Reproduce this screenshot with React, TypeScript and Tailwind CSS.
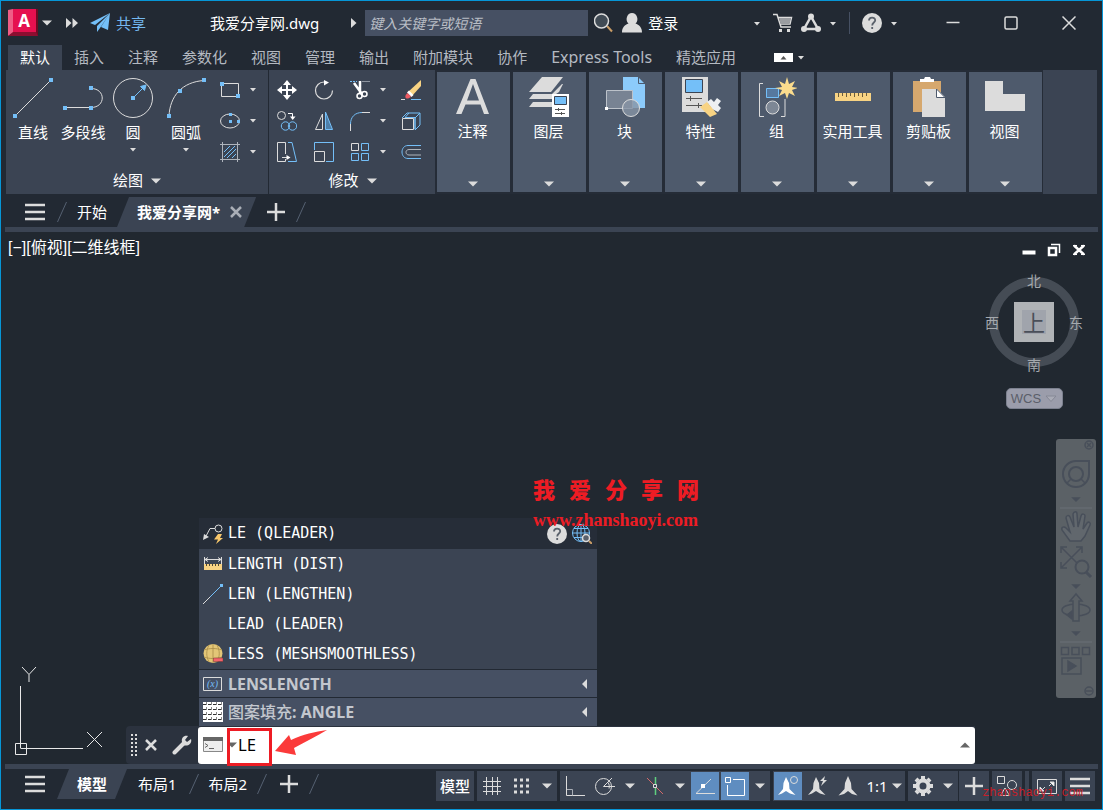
import React from 'react';

const GREY = '#dcdcdc';
const BLUE = '#74bff8';

type IconProps = { w?: number; h?: number; children: React.ReactNode };

const Icon: React.FC<IconProps> = ({ w = 20, h = 20, children }) => (
  <svg width={w} height={h} viewBox={`0 0 ${w} ${h}`} fill="none" stroke={GREY} aria-hidden="true" className="block shrink-0">
    {children}
  </svg>
);

const Caret: React.FC<{ small?: boolean }> = ({ small }) =>
  small ? (
    <Icon w={8} h={5}><path d="M1 1h6L4 4.5z" fill={GREY} stroke="none" /></Icon>
  ) : (
    <Icon w={10} h={6}><path d="M0 .5h10L5 5.5z" fill={GREY} stroke="none" /></Icon>
  );

const Dots: React.FC<{ points: number[][] }> = ({ points }) => (
  <>
    {points.map(([x, y]) => (
      <rect key={`${x}-${y}`} x={x} y={y} width="4" height="4" fill={BLUE} stroke="none" />
    ))}
  </>
);

const Plus = () => (
  <Icon><path d="M10 1v18M1 10h18" strokeWidth="2.500" /></Icon>
);

const Menu = () => (
  <Icon><path d="M0 3h20M0 10h20M0 17h20" strokeWidth="2.500" /></Icon>
);

const Slash = () => (
  <Icon w={10}><path d="M.5 20L9.5 0" stroke="#566172" /></Icon>
);

const HelpBadge = () => (
  <Icon>
    <circle cx="10" cy="10" r="10" fill={GREY} stroke="none" />
    <path d="M7 7.5c0-4 6.200-3.800 6.200-.3 0 2.300-3 2.400-3 5.200M10.200 14v2" stroke="#5a616b" strokeWidth="1.800" />
  </Icon>
);

/* ---------- ribbon data ---------- */

const TABS = ['默认', '插入', '注释', '参数化', '视图', '管理', '输出', '附加模块', '协作', 'Express Tools', '精选应用'];

const DRAW_TOOLS = [
  {
    label: '直线', menu: false, wide: false,
    icon: <Icon w={40} h={40}><path d="M2 38L38 2" /><Dots points={[[0, 36], [36, 0]]} /></Icon>,
  },
  {
    label: '多段线', menu: false, wide: false,
    icon: <Icon w={40} h={40}><path d="M2 29.500h26c15 0 15-19 0-19" /><Dots points={[[0, 28], [26, 28], [26, 8]]} /></Icon>,
  },
  {
    label: '圆', menu: true, wide: false,
    icon: (
      <Icon w={40} h={40}>
        <circle cx="20" cy="20" r="19.500" />
        <path d="M20 20L29 11" stroke={BLUE} />
        <path d="M33 7l-1.500 5.500-4-4z" fill={BLUE} stroke={BLUE} />
        <Dots points={[[18, 18]]} />
      </Icon>
    ),
  },
  {
    label: '圆弧', menu: true, wide: true,
    icon: <Icon w={40} h={40}><path d="M3 38C4 18 16 4 38 2.500" /><Dots points={[[1, 36], [12, 11], [36, 0]]} /></Icon>,
  },
];

const SHAPE_TOOLS = [
  { name: '矩形', icon: <Icon><path d="M1.500 3.500h17v13h-17z" /><Dots points={[[0, 2], [16, 14]]} /></Icon> },
  {
    name: '椭圆',
    icon: (
      <Icon>
        <ellipse cx="10" cy="10" rx="9.500" ry="7" />
        <path d="M9 2h3v3H9zM9 9h3v3H9zM17 9h3v3h-3z" fill={BLUE} stroke="none" />
      </Icon>
    ),
  },
  {
    name: '图案填充',
    icon: (
      <Icon>
        <path d="M0 2.500h20M0 17.500h20M2.500 0v20M17.500 0v20" stroke="#aeb4bc" />
        <path d="M4 10l6-6M4 15L15 4M7 16l9-9M12 16l4-4" stroke={BLUE} />
      </Icon>
    ),
  },
];

const MODIFY_TOOLS = [
  [
    {
      name: '移动',
      icon: (
        <Icon>
          <path d="M10 3v14M3 10h14" strokeWidth="2" stroke="#fff" />
          <path d="M10 0l4 5H6zM10 20l4-5H6zM0 10l5-4v8zM20 10l-5-4v8z" fill="#fff" stroke="none" />
        </Icon>
      ),
    },
    {
      name: '旋转',
      icon: <Icon><path d="M18.500 10.500a8.500 8.500 0 1 1-8.500-8.500" strokeWidth="1.200" /><path d="M10 0l5 2.500-5 3z" fill="#fff" stroke="none" /></Icon>,
    },
    {
      name: '修剪',
      icon: (
        <Icon>
          <path d="M0 1.500h7" stroke={BLUE} strokeDasharray="2 1" /><path d="M12 1.500h8" stroke="#8d949f" />
          <path d="M4 3l8 11M10 1v12" stroke="#fff" strokeWidth="2.500" />
          <circle cx="9.500" cy="16" r="2.500" stroke="#fff" strokeWidth="1.500" /><circle cx="14.500" cy="14" r="2.500" stroke="#fff" strokeWidth="1.500" />
        </Icon>
      ),
    },
    {
      name: '删除',
      icon: (
        <Icon>
          <path d="M0 19.500h4" /><path d="M10 19.500h10" stroke={BLUE} />
          <path d="M20 0v6l-9 10-4-4z" fill="#f8d383" stroke="none" />
          <path d="M8 10.500l4.500 4.500-2 2L6 12.500z" fill="#fff" stroke="none" />
          <path d="M6.500 13l3.500 3.500c-2 2.500-5 2.500-5.500 1s0-3 2-4.500z" fill="#ee5b62" stroke="none" />
        </Icon>
      ),
    },
  ],
  [
    {
      name: '复制',
      icon: (
        <Icon>
          <circle cx="4.500" cy="4.500" r="4" />
          <path d="M11 2.500h4.500V7" stroke="#fff" /><path d="M13 5.500h5.500L15.700 9z" fill="#fff" stroke="none" />
          <circle cx="8.500" cy="15" r="4.200" stroke={BLUE} /><circle cx="15.500" cy="15" r="4.200" stroke={BLUE} />
        </Icon>
      ),
    },
    { name: '镜像', icon: <Icon><path d="M8.500 3v15.500h-7z" /><path d="M11.500 1v17.500h7z" stroke={BLUE} fill="#4f7fa8" /></Icon> },
    { name: '圆角', icon: <Icon><path d="M.5 20v-7M12 1.500h8" /><path d="M.5 13C.5 6 5 1.500 12 1.500" stroke={BLUE} /></Icon> },
    {
      name: '分解',
      icon: (
        <Icon>
          <path d="M1 7l5-5h13v12l-5 5M19 2l-5 5M8 2L4 6.500h10v12M14 7v11" stroke={BLUE} />
          <path d="M1.500 7.500h11v11h-11z" />
        </Icon>
      ),
    },
  ],
  [
    {
      name: '拉伸',
      icon: (
        <Icon>
          <path d="M8.500 12V.5h-8v19h8V17M5 15.500h6" /><path d="M9.500 13l4 2.500-4 2.500z" fill="#fff" stroke="none" />
          <path d="M11 .5h4l4.500 19H11" stroke={BLUE} />
        </Icon>
      ),
    },
    { name: '缩放', icon: <Icon><path d="M.5 8V.5h19v19H12" stroke={BLUE} /><path d="M.5 9.500h10v10H.5z" /></Icon> },
    {
      name: '阵列',
      icon: <Icon><path d="M1.500 1.500h7v7h-7z" /><path d="M11.500 1.500h7v7h-7zM1.500 11.500h7v7h-7zM11.500 11.500h7v7h-7z" stroke={BLUE} /></Icon>,
    },
    { name: '偏移', icon: <Icon><path d="M20 3.500H7c-8 0-8 13 0 13h13" stroke={BLUE} /><path d="M20 7.500H8c-4 0-4 5.500 0 5.500h12" stroke="#aeb4bc" /></Icon> },
  ],
];

const PANELS = [
  {
    label: '注释',
    icon: <Icon w={40} h={40}><path d="M3 37L17.500 2h5L36 37h-5l-3.500-9.500h-15L8.500 37zM14 23.500h12L20 7z" fill={GREY} fillRule="evenodd" stroke="none" /></Icon>,
  },
  {
    label: '图层',
    icon: (
      <Icon w={40} h={40}>
        <g fill={GREY} stroke="none">
          <path d="M13 0h21L22 15H0z" />
          <path d="M4 17h19L33 7h1l-4 8-3 2-4 5H0z" />
          <path d="M4 25h19v5H0z" />
          <path d="M23 17h17v23H23z" fill="#fff" />
        </g>
        <path d="M25.500 19.500h12v8h-12z" fill={BLUE} stroke="#3b4453" />
        <path d="M26 32.500h10M26 36.500h10M29.500 31v3M32.500 35v3" stroke="#555" />
      </Icon>
    ),
  },
  {
    label: '块',
    icon: (
      <Icon w={40} h={40}>
        <path d="M18 0h15l7 7v24H18z" fill="#8ccbfb" stroke="none" />
        <path d="M33.500 0v6.500H40" stroke="#4a5a70" />
        <path d="M1.500 13.500h26v18h-26z" fill="#788393" stroke="#bcc2ca" />
        <circle cx="26" cy="31" r="8.500" fill="#8794a5" fillOpacity=".8" />
        <path d="M0 30h3v3H0z" fill="#fff" stroke="none" />
      </Icon>
    ),
  },
  {
    label: '特性',
    icon: (
      <Icon w={40} h={40}>
        <path d="M1 0h26v35H1z" fill={GREY} stroke="none" />
        <path d="M4.500 2.500h17v13h-17z" fill={BLUE} stroke="#3b4453" />
        <path d="M5 21.500h16M5 28.500h16M9.500 19v5M17.500 26v5" stroke="#555" />
        <path d="M26 25l4-3 3 3 3-4 4 3-3 4 3 3-3 4-6-3z" fill="#eef0f2" stroke="none" />
        <path d="M19 30l7-5 10 12-7 3z" fill="#f8d383" stroke="none" />
      </Icon>
    ),
  },
  {
    label: '组',
    icon: (
      <Icon w={40} h={40}>
        <path d="M6 6.500H2.500v33H7M24 39.500h4V22" />
        <path d="M9.500 11.500h12v9h-12z" fill="#56789e" stroke={BLUE} />
        <circle cx="15.500" cy="30.500" r="6.500" fill="#7d8795" />
        <path d="M30 0l2 7 6-3-3 6 6 1-6 2 3 6-6-3-2 6-2-6-6 3 3-6-7-2 7-1-3-6 6 3z" fill="#fbdc8d" stroke="none" />
      </Icon>
    ),
  },
  {
    label: '实用工具',
    icon: (
      <Icon w={40} h={40}>
        <path d="M2 16h36v8H2z" fill="#f8d383" stroke="none" />
        <path d="M5.500 16v4M9.500 16v3M13.500 16v4M17.500 16v3M21.500 16v4M25.500 16v3M29.500 16v4M33.500 16v3" stroke="#6a5c3c" />
      </Icon>
    ),
  },
  {
    label: '剪贴板',
    icon: (
      <Icon w={40} h={40}>
        <path d="M4 4h28v31H4z" fill="#d6a86e" stroke="none" />
        <path d="M11 5V2h4l1-2h5l1 2h3v3z" fill="#fff" stroke="none" />
        <path d="M13 12h15l8 8v20H13z" fill={GREY} stroke="none" />
        <path d="M27.500 12v8.500H36z" fill="#fff" stroke="#4e5a6c" />
      </Icon>
    ),
  },
  {
    label: '视图',
    icon: <Icon w={40} h={40}><path d="M0 4h18v13h22v17H0z" fill={GREY} stroke="none" /></Icon>,
  },
];

/* ---------- title bar ---------- */

const TitleBar = () => (
  <header className="flex h-11 items-center pr-[26px] pl-[7px] text-[15px] text-white">
    <button aria-label="应用程序菜单" className="flex items-center gap-1">
      <svg width="30" height="28" viewBox="0 0 30 28" className="block">
        <path d="M5 0h25v27H5z" fill="#6e0a22" />
        <path d="M0 1l5-1v24L0 27z" fill="#ef5d86" />
        <path d="M5 0h23v23H5z" fill="#e5104f" />
        <path d="M0 27l5-4h23l2 4z" fill="#8c0e30" />
        <text x="16" y="18" textAnchor="middle" fontSize="17" className="fill-white font-['Open_Sans',sans-serif] font-bold">A</text>
      </svg>
      <Caret />
    </button>
    <button aria-label="更多" className="ml-3.5">
      <Icon w={12} h={12}><path d="M0 1l5.500 5L0 11zM6.500 1l5.500 5-5.500 5z" fill={GREY} stroke="none" /></Icon>
    </button>
    <button className="ml-3 flex items-center gap-1.5 text-[#74b8f0]">
      <Icon>
        <path d="M20 0L0 10l5 2zM20 0L7 13v6l3-4zM20 0l-9 14 7 3z" fill={BLUE} stroke="none" />
      </Icon>
      共享
    </button>
    <h1 className="ml-16 whitespace-nowrap">我爱分享网.dwg</h1>
    <div className="ml-8 flex items-center gap-2">
      <Icon w={6} h={10}><path d="M0 0l5.500 5L0 10z" fill={GREY} stroke="none" /></Icon>
      <input
        type="search"
        aria-label="搜索"
        placeholder="键入关键字或短语"
        className="h-[26px] w-[223px] bg-[#465063] px-1 text-[14px] italic outline-none placeholder:text-[#b9bec6]"
      />
    </div>
    <button aria-label="搜索" className="ml-1.5">
      <Icon><path d="M13 13l5 5.500" stroke="#c99c66" strokeWidth="2" /><circle cx="7.500" cy="8" r="7" fill="#414b55" strokeWidth="1.500" /></Icon>
    </button>
    <button className="ml-2 flex items-center gap-1.5 whitespace-nowrap">
      <Icon><path d="M10 0a5.500 6 0 0 1 3.500 10.500C17 12 20 14 20 19.500H0C0 14 3 12 6.500 10.500A5.500 6 0 0 1 10 0z" fill={GREY} stroke="none" /></Icon>
      登录
    </button>
    <div className="ml-auto flex items-center">
      <button aria-label="登录选项"><Caret small /></button>
      <button aria-label="购物车" className="ml-3">
        <Icon>
          <path d="M0 1.500h4l4 12.500h10M5 4.500h13.500L17 11H7" strokeWidth="1.500" />
          <path d="M6 5h12l-1.500 6H7.500z" fill="#9a9da1" stroke="none" />
          <path d="M6 16h3v3H6zM14 16h3v3h-3z" fill={GREY} stroke="none" />
        </Icon>
      </button>
      <button aria-label="Autodesk" className="ml-2 flex items-center gap-2">
        <Icon>
          <path d="M10 3.500L3 16h14z" strokeWidth="2.500" />
          <g fill={GREY} stroke="none"><circle cx="10" cy="3.500" r="3" /><circle cx="3" cy="16" r="3" /><circle cx="17" cy="16" r="3" /></g>
        </Icon>
        <Caret small />
      </button>
      <span className="ml-3 h-[22px] w-px bg-[#465063]" />
      <button aria-label="帮助" className="ml-3 flex items-center gap-2">
        <HelpBadge />
        <Caret small />
      </button>
      <div className="ml-12 flex items-center gap-11">
        <button aria-label="最小化"><Icon w={14} h={14}><path d="M.5 6.500h13" strokeWidth="1.500" /></Icon></button>
        <button aria-label="最大化"><Icon w={14} h={14}><rect x="1" y="1" width="12" height="12" rx="1.500" strokeWidth="1.500" /></Icon></button>
        <button aria-label="关闭"><Icon w={14} h={14}><path d="M.5 .5l13 13M13.500 .5l-13 13" strokeWidth="1.500" /></Icon></button>
      </div>
    </div>
  </header>
);

const RibbonTabs = () => (
  <nav className="flex h-[25px] items-center pl-[7px] text-[15px] whitespace-nowrap text-[#b4b9c1]">
    {TABS.map((tab, i) => (
      <button
        key={tab}
        className={`h-[25px] px-3 leading-[25px] ${i === 0 ? 'bg-[#3b4453] text-white' : ''} ${tab === 'Express Tools' ? 'text-[16px]' : ''}`}
      >
        {tab}
      </button>
    ))}
    <button aria-label="最小化功能区" className="ml-[26px] flex items-center gap-1">
      <Icon w={19} h={9}><path d="M0 0h19v9H0z" fill="#fff" stroke="none" /><path d="M6.500 6.500h6l-3-3.500z" fill="#555" stroke="none" /></Icon>
      <Caret small />
    </button>
  </nav>
);

const PanelTitle: React.FC<{ label: string }> = ({ label }) => (
  <button className="flex h-[27px] w-full items-center justify-center gap-2 leading-[27px]">
    {label}
    <Caret />
  </button>
);

const Ribbon = () => (
  <section className="mx-[5px] flex h-[124px] bg-[#3b4453] text-[15px] whitespace-nowrap text-white">
    {/* Draw */}
    <div className="w-[263px] border-r border-[#222933] pt-1">
      <div className="flex h-[93px] pl-0.5">
        {DRAW_TOOLS.map(tool => (
          <button key={tool.label} className={`flex flex-col items-center pt-1 ${tool.wide ? 'w-14' : 'w-[50px]'}`}>
            {tool.icon}
            <span className="mt-[3px] mb-1 leading-[22px]">{tool.label}</span>
            {tool.menu && <Caret small />}
          </button>
        ))}
        <div className="ml-1.5">
          {SHAPE_TOOLS.map(tool => (
            <button key={tool.name} aria-label={tool.name} className="flex h-[31px] items-center gap-[9px]">
              {tool.icon}
              <Caret small />
            </button>
          ))}
        </div>
      </div>
      <PanelTitle label="绘图" />
    </div>

    {/* Modify */}
    <div className="w-[166px] pt-1 pl-px">
      {MODIFY_TOOLS.map((row, r) => (
        <div key={r} className="grid h-[31px] grid-cols-[34px_40px_32px_14px_42px] place-items-center">
          {row.map((tool, c) => (
            <React.Fragment key={tool.name}>
              {c === 3 && <button aria-label="更多选项"><Caret small /></button>}
              <button aria-label={tool.name}>{tool.icon}</button>
            </React.Fragment>
          ))}
        </div>
      ))}
      <PanelTitle label="修改" />
    </div>

    {/* Collapsed panels */}
    <div className="flex gap-[3px] bg-[#252c37] py-0.5 pr-px pl-0.5">
      {PANELS.map(panel => (
        <button key={panel.label} className="flex w-[73px] flex-col items-center bg-[#4e5a6c] pt-[5px] pr-0.5 pb-[5px]">
          {panel.icon}
          <span className="mt-[3px] leading-[22px]">{panel.label}</span>
          <span className="mt-auto"><Caret /></span>
        </button>
      ))}
    </div>
  </section>
);

const FileTabs = () => (
  <nav className="mt-[3px] flex h-[30px] items-center pl-6 text-[15px] whitespace-nowrap text-white">
    <button aria-label="菜单"><Menu /></button>
    <span className="ml-3"><Slash /></span>
    <button className="ml-2.5">开始</button>
    <div className="ml-2.5 flex h-[30px] items-center gap-2.5 bg-[#3b4453] pr-2.5 pl-5 [clip-path:polygon(12px_0,100%_0,calc(100%-12px)_100%,0_100%)]">
      <button className="font-bold">我爱分享网*</button>
      <button aria-label="关闭图形" className="mr-1">
        <Icon w={12} h={12}><path d="M1 1l10 10M11 1L1 11" stroke="#a9aeb6" strokeWidth="2.500" /></Icon>
      </button>
    </div>
    <button aria-label="新图形" className="ml-2.5"><Plus /></button>
    <span className="ml-2.5"><Slash /></span>
  </nav>
);

/* ---------- drawing area ---------- */

const ViewCube = () => (
  <div className="absolute top-10 right-[18px] w-[100px] text-[14px] text-[#a5a9ae]">
    <div className="relative flex h-[100px] items-center justify-center">
      <div className="flex size-[90px] items-center justify-center rounded-full border-9 border-[#454c55]">
        <div className="flex size-10 items-center justify-center bg-[#b0b3b6]">
          <span className="flex size-6 items-center justify-center bg-[#a0a4ac] text-[22px] leading-6 text-[#4a4f59]">上</span>
        </div>
      </div>
      <span className="absolute inset-x-0 top-0 text-center leading-[18px]">北</span>
      <span className="absolute inset-x-0 bottom-0 text-center leading-[14px]">南</span>
      <span className="absolute top-[41px] left-px leading-[20px]">西</span>
      <span className="absolute top-[41px] right-px leading-[20px]">东</span>
    </div>
    <button className="mx-auto mt-4 flex h-[21px] w-[57px] items-center justify-center gap-1 rounded-[5px] border border-[#7c818f] bg-[#9b9dab] font-['Liberation_Sans',sans-serif] text-[13px] text-[#5a5e69]">
      WCS
      <svg width="12" height="8" viewBox="0 0 12 8" className="block"><path d="M1 1h10L6 6.500z" fill="#a9abb6" stroke="#858895" /></svg>
    </button>
  </div>
);

const NavBar = () => (
  <div className="absolute top-[207px] right-[6px] h-[259px] w-10 rounded-[3px] bg-[#5b6166]">
    <svg width="40" height="259" viewBox="0 0 40 259" fill="none" stroke="#484f5a" strokeWidth="1.500" className="block" role="img" aria-label="导航栏">
      <circle cx="33" cy="6" r="4" /><path d="M31 4l4 4M35 4l-4 4" />
      <path d="M20 22h13v13a13 13 0 1 1-13-13z" strokeWidth="2" /><circle cx="20" cy="35" r="7" strokeWidth="2" />
      <path d="M11 44l4-4M29 44l-4-4" />
      <path d="M17 59h6l-3 3zM17 146h6l-3 3zM17 193h6l-3 3z" fill="#484f5a" />
      <path d="M4 69h32M4 203h32" stroke="#6a7076" strokeWidth="1" />
      <path d="M14 102l-8-11c-1-3 2-4 4-2l4 4-4-14c0-3 3-3 4-1l4 10-1-13c1-3 4-3 4 0l1 13 3-11c1-3 4-2 4 0l-2 13 4-6c2-2 4 0 3 2l-5 11-4 5z" fill="#6b7077" fillOpacity=".4" />
      <path d="M6 109l19 19M25 109L6 128M5 114v-6h6M20 108h6v6M5 123v6h6" />
      <circle cx="26" cy="128" r="6.500" fill="#5b6166" strokeWidth="2" /><path d="M30 133l5 5" strokeWidth="3" />
      <ellipse cx="20" cy="171" rx="14" ry="6" /><path d="M17 182v-20h-3l6-7 6 7h-3v20z" fill="#5b6166" />
      <path d="M16 172l-5 4 5 4z" fill="#484f5a" />
      <path d="M5.500 208.500h7v7h-7zM16 208.500h7v7h-7zM26.500 208.500h7v7h-7zM6 219h19v16H6z" />
      <path d="M12 222v10l8-5z" fill="#484f5a" />
      <circle cx="33" cy="252" r="4" /><path d="M30 252h6" />
    </svg>
  </div>
);

const COMMANDS = [
  {
    text: 'LENGTH (DIST)',
    icon: (
      <Icon>
        <path d="M1.500 3v7M18.500 3v7M2 5.500h16M5 3.500L2 5.500l3 2M15 3.500l3 2-3 2" />
        <path d="M1 10h18v6H1z" fill="#f8d383" stroke="none" />
        <path d="M3.500 10v2M6.500 10v2M9.500 10v2M12.500 10v2M15.500 10v2" stroke="#4d4636" />
      </Icon>
    ),
  },
  { text: 'LEN (LENGTHEN)', icon: <Icon><path d="M0 20l7-7" /><path d="M7 13L18 2" stroke={BLUE} /><path d="M17 0h3v3h-3z" fill={BLUE} stroke="none" /></Icon> },
  { text: 'LEAD (LEADER)', icon: <span className="w-5" /> },
  {
    text: 'LESS (MESHSMOOTHLESS)',
    icon: (
      <Icon>
        <circle cx="10" cy="9.500" r="9.500" fill="#e3c677" stroke="none" />
        <path d="M10 0v19M1 6c6-2 12-2 18 0M1 13c6 2 12 2 18 0M6 1c-3 6-3 11 0 17M14 1c3 6 3 11 0 17" stroke="#a88c48" strokeWidth=".8" />
        <path d="M10.500 14h9.500v3.500h-9.500z" fill="#f3646b" stroke="#7a3030" strokeWidth=".5" />
      </Icon>
    ),
  },
];

const Suggestions = () => (
  <ul className="ml-[73px] w-[398px] bg-[#3b4453] text-white">
    <li className="flex h-[31px] items-center bg-[#262d38] pr-[5px] pl-1 font-['DejaVu_Sans_Mono',monospace] text-[15px]">
      <button className="flex grow items-center gap-[5px]">
        <Icon>
          <path d="M2 14L7 4.500h5" /><path d="M0 16l1-6 5 3z" fill={GREY} stroke="none" /><circle cx="15.500" cy="4.500" r="3.500" />
          <path d="M15 10h4l-2 4h3l-7 6 2-4.500h-4z" fill="#f8c76b" stroke="none" />
        </Icon>
        LE (QLEADER)
      </button>
      <button aria-label="帮助"><HelpBadge /></button>
      <button aria-label="在 Internet 上搜索" className="ml-[5px]">
        <Icon>
          <g stroke={BLUE}><circle cx="9" cy="9" r="8.500" /><ellipse cx="9" cy="9" rx="4" ry="8.500" /><path d="M9 0v18M0 9h18M2 4.500h14M2 13.500h14" /></g>
          <path d="M17 17l3 3" stroke="#c99c66" strokeWidth="2" /><circle cx="14" cy="14" r="3.500" fill="#59616c" strokeWidth="1.500" />
        </Icon>
      </button>
    </li>
    {COMMANDS.map(cmd => (
      <li key={cmd.text} className="h-[30px] px-1 font-['DejaVu_Sans_Mono',monospace] text-[15px]">
        <button className="flex h-[30px] w-full items-center gap-[5px]">
          {cmd.icon}
          {cmd.text}
        </button>
      </li>
    ))}
    <li className="border-t border-[#222933] bg-[#465063] px-1 font-bold text-[#c3c7ce]">
      <button className="flex h-[27px] w-full items-center gap-[5px] text-[16px]">
        <Icon>
          <path d="M.5 3.500h18v13H.5z" />
          <text x="9.500" y="13" textAnchor="middle" fontSize="10" fill={BLUE} stroke="none" className="font-['Liberation_Serif',serif] font-normal italic">(x)</text>
        </Icon>
        <span className="grow text-left">LENSLENGTH</span>
        <Icon w={6} h={10}><path d="M6 0v10L1 5z" fill={GREY} stroke="none" /></Icon>
        <span className="w-px" />
      </button>
    </li>
    <li className="border-t border-[#222933] bg-[#465063] px-1 font-bold text-[#c3c7ce]">
      <button className="flex h-7 w-full items-center gap-[5px] text-[16px]">
        <Icon>
          <path d="M0 0h20v20H0z" fill="#fff" stroke="none" />
          <path d="M0 2.500h20M0 7.500h20M0 12.500h20M0 17.500h20" stroke="#333" strokeDasharray="4 1" />
          <path d="M3.500 0v20M8.500 0v20M13.500 0v20M18.500 0v20" stroke="#888" strokeDasharray="3 2" />
        </Icon>
        <span className="grow text-left"><span className="font-medium">图案填充</span>: ANGLE</span>
        <Icon w={6} h={10}><path d="M6 0v10L1 5z" fill={GREY} stroke="none" /></Icon>
        <span className="w-px" />
      </button>
    </li>
  </ul>
);

const CommandLine = () => (
  <div className="relative flex h-[38px] items-center rounded-l bg-[#2b323e]">
    <div className="flex w-[72px] items-center pl-1">
      <Icon w={8} h={22}><path d="M2 0v22M6 0v22" strokeWidth="2" strokeDasharray="2 2" /></Icon>
      <button aria-label="关闭命令行" className="ml-[7px]">
        <Icon w={12} h={12}><path d="M1 1l10 10M11 1L1 11" strokeWidth="2.500" /></Icon>
      </button>
      <button aria-label="自定义" className="ml-[15px]">
        <Icon>
          <path d="M2.500 17.500l9-9" strokeWidth="4" strokeLinecap="round" />
          <path d="M19 4l-4 3-2-2 3-4c-4-1-7 2-6 6 0 3 3 4 5 3.500 3-.5 5-3.500 4-6.500z" fill={GREY} stroke="none" />
        </Icon>
      </button>
    </div>
    <div className="flex h-[37px] grow items-center rounded-[3px] bg-white px-[5px]">
      <button aria-label="最近使用的命令" className="flex items-center gap-1">
        <Icon>
          <path d="M.5 2.500h19v14H.5z" fill="#eee" stroke="#888" />
          <path d="M0 2h20v4H0z" fill="#666" stroke="none" /><path d="M2 8.500l3 2-3 2M6 13.500h5" stroke="#666" />
        </Icon>
        <Icon w={10} h={6}><path d="M0 .5h10L5 5.500z" fill="#666" stroke="none" /></Icon>
      </button>
      <input
        type="text"
        aria-label="命令"
        defaultValue="LE"
        className="h-7 grow px-px pt-0.5 font-['DejaVu_Sans_Mono',monospace] text-[15px] text-black outline-none"
      />
      <button aria-label="命令历史"><Icon w={10} h={6}><path d="M0 5.500h10L5 .5z" fill="#666" stroke="none" /></Icon></button>
    </div>
    {/* Callout around the typed alias */}
    <div className="absolute top-0.5 left-[101px] h-[38px] w-[45px] border-3 border-[#ed1c24]" />
    <svg width="54" height="28" viewBox="0 0 54 28" className="absolute top-1 left-[149px]">
      <path d="M0 21L14 5l2 5C28 4 40 2 52 0 42 6 30 12 19 18l2 7z" fill="#fb3a3a" />
    </svg>
  </div>
);

const DrawingArea = () => (
  <main className="relative flex min-h-[532px] grow flex-col overflow-visible bg-[#212830]">
    <p className="px-[7px] pt-1 font-['Liberation_Sans','Noto_Sans_CJK_SC',sans-serif] text-[16px] leading-6 text-white">[−][俯视][二维线框]</p>
    <div className="absolute top-[11px] right-[16px] flex gap-[11px]">
      <button aria-label="最小化视口"><Icon w={14} h={14}><path d="M.5 9.500h13" stroke="#fff" strokeWidth="4" /></Icon></button>
      <button aria-label="还原视口"><Icon w={14} h={14}><path d="M4 1.500h8.500V10" stroke="#fff" strokeWidth="1.500" /><path d="M2 5h7v7H2z" stroke="#fff" strokeWidth="2.500" /></Icon></button>
      <button aria-label="关闭视口"><Icon w={14} h={14}><path d="M2 2.500l10 9M12 2.500l-10 9" stroke="#fff" strokeWidth="2.500" /><path d="M1 2.500h4M9 2.500h4M1 11.500h4M9 11.500h4" stroke="#fff" /></Icon></button>
    </div>
    <ViewCube />
    <NavBar />

    {/* UCS icon */}
    <svg width="90" height="90" viewBox="0 0 90 90" fill="none" stroke="#e8e8e8" className="absolute bottom-[9px] left-[13px]">
      <path d="M6.500 21v62M6.500 83.500H69M1.500 78.500h11v11h-11z" />
      <path d="M8 2l7 7.500L22 2M15 9.500V17M73 67l15 15M88 67L73 82" />
    </svg>

    <div className="mt-auto mr-[127px] ml-[125px]">
      <Suggestions />
      <CommandLine />
    </div>

    <div className="pointer-events-none absolute bottom-[232px] left-[532px] text-[#ed1c24]">
      <p className="flex gap-3.5 text-[22px] leading-8 font-black">
        {[...'我爱分享网'].map(ch => <span key={ch}>{ch}</span>)}
      </p>
      <p className="mt-[3px] font-['Liberation_Serif',serif] text-[18px] leading-6 font-bold">www.zhanshaoyi.com</p>
    </div>
  </main>
);

/* ---------- status bar ---------- */

const Cell: React.FC<{ name: string; on?: boolean; children: React.ReactNode }> = ({ name, on, children }) => (
  <button aria-label={name} aria-pressed={on} className={`flex h-[30px] w-[30px] items-center justify-center border border-[#3b4453] ${on ? 'bg-[#5f8dc0]' : 'bg-[#3b4453]'}`}>
    {children}
  </button>
);

const CaretCell: React.FC<{ name: string }> = ({ name }) => (
  <button aria-label={name} className="flex w-5 items-center justify-center"><Caret /></button>
);

const Group: React.FC<{ children: React.ReactNode }> = ({ children }) => (
  <div className="flex h-[30px] bg-[#3b4453]">{children}</div>
);

const FIN = 'M10 0l3 7 .5 6 6 6.500-5.500-1.500L10 15l-4 3-5.500 1.500 6-6.500L7 7z';

const StatusBar = () => (
  <footer className="relative flex h-10 items-start pr-[7px] pl-6 text-[15px] whitespace-nowrap text-white">
    <div className="flex h-[30px] items-center">
      <button aria-label="布局菜单"><Menu /></button>
      <button className="ml-3 h-[30px] bg-[#3b4453] px-5 font-bold [clip-path:polygon(12px_0,100%_0,calc(100%-12px)_100%,0_100%)]">模型</button>
      <button className="ml-[11px]">布局1</button>
      <span className="ml-3"><Slash /></span>
      <button className="ml-2.5">布局2</button>
      <span className="ml-2.5"><Slash /></span>
      <button aria-label="新建布局" className="ml-3"><Plus /></button>
      <span className="ml-2.5"><Slash /></span>
    </div>
    <div className="mt-0.5 ml-auto flex gap-[3px]">
      <Group><button className="w-[38px] font-medium">模型</button></Group>
      <Group>
        <Cell name="栅格"><Icon><path d="M4.500 1v18M10.500 1v18M15.500 1v18M1 5.500h18M1 10.500h18M1 15.500h18" /></Icon></Cell>
        <Cell name="捕捉"><Icon><path d="M2 4h16M2 10h16M2 16h16" strokeWidth="3" strokeDasharray="3 3" /></Icon></Cell>
        <CaretCell name="捕捉设置" />
      </Group>
      <Group>
        <Cell name="正交"><Icon><path d="M1.500 0v19.500H20" /><path d="M2 13.500h5.500v6" stroke="#a9aeb6" /></Icon></Cell>
        <Cell name="极轴"><Icon><circle cx="8.500" cy="10.500" r="8" /><path d="M8.500 10.500L17 2M8.500 10.500H20M13 6.500c1.500 2 1.500 4 1 6" /></Icon></Cell>
        <CaretCell name="极轴设置" />
        <Cell name="等轴测"><Icon><path d="M2 2l7 7M11 11l7 7" stroke="#d06a6a" /><path d="M10.500 1v7M10.500 12v7" stroke="#5fd07f" strokeWidth="1.500" /><path d="M8.500 8.500h3v3h-3z" /></Icon></Cell>
        <CaretCell name="等轴测设置" />
        <Cell name="对象捕捉追踪" on><Icon><path d="M1 17.500L16 3M1 17.500h19" /><path d="M6 8h4v4H6z" fill="#fff" stroke="none" /></Icon></Cell>
        <Cell name="对象捕捉" on><Icon><path d="M8 3.500h11.500v16H2.500V9" stroke="#fff" /><path d="M.5 1.500h5v5h-5z" stroke="#fff" /></Icon></Cell>
        <CaretCell name="对象捕捉设置" />
      </Group>
      <Group>
        <Cell name="注释可见性" on><Icon><path d="M8 1l3 6 .5 6 6 6-5.500-1.500L8 15l-4 2.500L0 19l5-6 .5-6z" fill="#fff" stroke="none" /><circle cx="16" cy="4" r="3.500" /></Icon></Cell>
        <Cell name="自动缩放"><Icon><path d="M8 1l3 6 .5 6 6 6-5.500-1.500L8 15l-4 2.500L0 19l5-6 .5-6z" fill={GREY} stroke="none" /><path d="M17 0l-5 5h3l-2 5 6-6h-3z" fill={GREY} stroke="none" /></Icon></Cell>
        <Cell name="注释比例"><Icon><path d={FIN} fill={GREY} stroke="none" /></Icon></Cell>
        <button aria-label="比例 1:1" className="flex w-[42px] items-center justify-center gap-1"><span>1:1</span><Caret /></button>
      </Group>
      <Group>
        <Cell name="切换工作空间">
          <Icon>
            <circle cx="10" cy="10" r="5.500" strokeWidth="4" />
            <path d="M10 0v3M10 17v3M0 10h3M17 10h3M3 3l2 2M15 15l2 2M17 3l-2 2M5 15l-2 2" strokeWidth="4" />
          </Icon>
        </Cell>
        <CaretCell name="工作空间" />
        <span className="w-px bg-[#222933]" />
        <Cell name="注释监视器"><Plus /></Cell>
      </Group>
      <Group><Cell name="隔离对象"><Icon><path d="M.5 .5h7v7h-7z" /><circle cx="15" cy="9" r="4.500" /><path d="M8 12l4.500 7.500h-9z" /></Icon></Cell></Group>
      <Group><span className="w-1" /></Group>
      <Group><Cell name="全屏显示"><Icon><path d="M.5 3.500h19v14H.5z" /><path d="M13 6h4v4zM3 11v4h4z" fill="#fff" /><path d="M12 10l4-4M8 11l-4 4" /></Icon></Cell></Group>
      <Group><Cell name="自定义"><Menu /></Cell></Group>
    </div>
    <p className="pointer-events-none absolute right-[19px] bottom-2 font-['Liberation_Mono',monospace] text-[12px] leading-4 text-[#c8202a]">zhanshaoyi.com</p>
  </footer>
);

export default function App() {
  return (
    <div className="flex min-h-screen flex-col border border-[#0696d7] bg-[#222933] font-['Noto_Sans','Noto_Sans_CJK_SC',sans-serif]">
      <TitleBar />
      <RibbonTabs />
      <Ribbon />
      <FileTabs />
      <div className="mx-1 h-[5px] bg-[#3b4453]" />
      <DrawingArea />
      <div className="mx-1 h-[5px] bg-[#3b4453]" />
      <StatusBar />
    </div>
  );
}
